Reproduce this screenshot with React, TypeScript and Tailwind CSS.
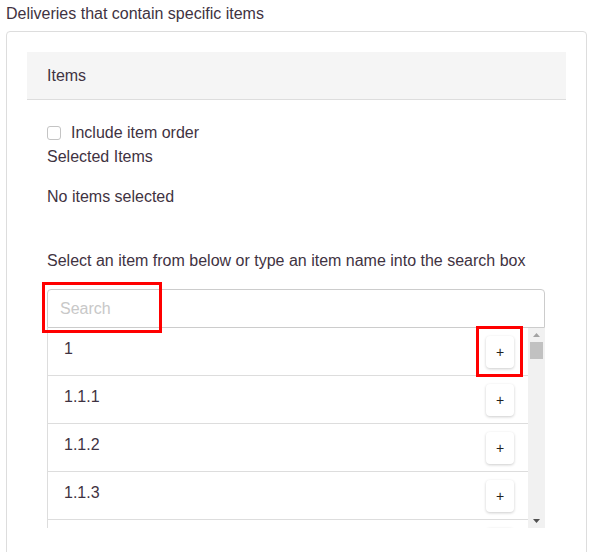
import React from 'react';

const items = ['1', '1.1.1', '1.1.2', '1.1.3', '1.1.4'];

const App: React.FC = () => {
  return (
    <div className="relative w-[601px] h-[552px] overflow-hidden bg-white text-[16px] text-[#3f3342] font-['Liberation_Sans',Arial,sans-serif]">
      <div className="h-[31px] pl-[6px] pt-[4px] leading-[20px]">Deliveries that contain specific items</div>

      <div className="ml-[6px] w-[581px] h-[560px] border border-[#dddddd] rounded-[4px] p-[20px]">
        <div className="h-[48px] flex items-center px-[20px] bg-[#f5f5f5] border-b border-[#dddddd]">Items</div>

        <div className="px-[20px] pr-[21px] leading-[20px]">
          <label className="mt-[23px] h-[20px] flex items-center gap-[10px]">
            <span className="w-[14px] h-[14px] border border-[#c4c4c4] rounded-[3px] bg-white" />
            Include item order
          </label>
          <div className="mt-[4px]">Selected Items</div>
          <div className="mt-[20px]">No items selected</div>
          <div className="mt-[44px]">Select an item from below or type an item name into the search box</div>

          <div className="mt-[18px] h-[39px] flex items-center px-[12px] border border-[#cccccc] rounded-t-[4px] text-[#c8c8c8]">
            Search
          </div>

          <div className="flex h-[200px]">
            <div className="flex-1 overflow-hidden border-l border-[#dddddd]">
              {items.map((it, i) => (
                <div key={it} className="h-[48px] flex justify-between border-b border-[#dddddd] pl-[16px] pr-[14px]">
                  <span className="pt-[11px]">{i < 4 ? it : ''}</span>
                  <button className="self-center w-[28px] h-[32px] rounded-[4px] bg-white shadow-[0_1px_3px_rgba(0,0,0,0.2)] text-[14px] text-[#222222] flex items-center justify-center">
                    {i < 4 ? '+' : ''}
                  </button>
                </div>
              ))}
            </div>
            <div className="w-[17px] bg-[#f1f1f1] flex flex-col items-center">
              <svg width="17" height="14" viewBox="0 0 17 14" className="shrink-0">
                <path d="M5 9 L8.5 5 L12 9 Z" fill="#a3a3a3" />
              </svg>
              <div className="w-[13px] h-[17px] bg-[#c1c1c1]" />
              <div className="flex-1" />
              <svg width="17" height="14" viewBox="0 0 17 14" className="shrink-0">
                <path d="M5 5 L12 5 L8.5 9 Z" fill="#505050" />
              </svg>
            </div>
          </div>
        </div>
      </div>

      <div className="absolute left-[42px] top-[282px] w-[120px] h-[51px] border-[3px] border-[#ff0000]" />
      <div className="absolute left-[476px] top-[326px] w-[47px] h-[51px] border-[3px] border-[#ff0000]" />
    </div>
  );
};

export default App;
